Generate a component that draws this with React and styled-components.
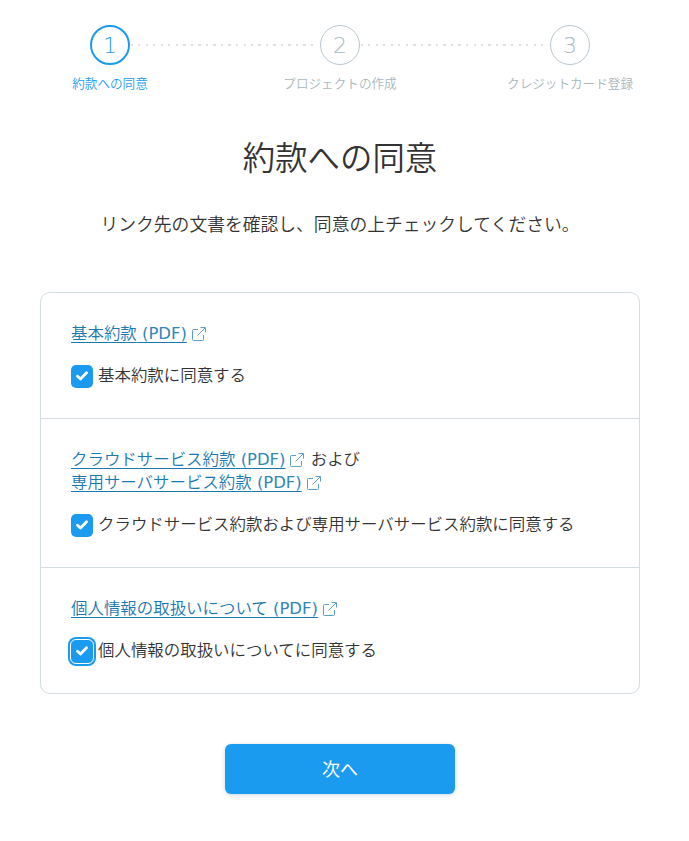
import React from 'react';
import styled, { createGlobalStyle } from 'styled-components';

const Global = createGlobalStyle`
  html, body {
    margin: 0;
    padding: 0;
    background: #fff;
  }
  body {
    font-family: "DejaVu Sans", "Noto Sans CJK JP", sans-serif;
    font-weight: 350;
    color: #333;
  }
`;

const Page = styled.div`
  width: 680px;
  padding-top: 25px;
`;

const Stepper = styled.ol`
  display: grid;
  grid-template-columns: repeat(3, 230px);
  justify-content: center;
  list-style: none;
  margin: 0;
  padding: 0;
`;

const Step = styled.li`
  position: relative;
  display: flex;
  flex-direction: column;
  align-items: center;

  &:not(:last-child)::after {
    content: '';
    position: absolute;
    top: 19px;
    left: 136px;
    width: 184px;
    height: 2px;
    background: repeating-linear-gradient(to right, #dbe1e5 0 2px, transparent 2px 7.5px);
  }
`;

const StepCircle = styled.span`
  box-sizing: border-box;
  width: 40px;
  height: 40px;
  border-radius: 50%;
  display: flex;
  align-items: center;
  justify-content: center;
  font-size: 22px;
  font-weight: 200;
  background: #fff;
  border: ${p => (p.$active ? '2px solid #1a9bf0' : '1px solid #b8c6cf')};
  color: ${p => (p.$active ? '#1a9bf0' : '#a9b8c2')};
`;

const StepLabel = styled.span`
  margin-top: 8px;
  font-size: 12.6px;
  line-height: 22px;
  color: ${p => (p.$active ? '#1a9bf0' : '#a9b6be')};
`;

const Title = styled.h1`
  margin: 40px 0 0;
  font-size: 32.4px;
  font-weight: 350;
  line-height: 48px;
  text-align: center;
  color: #333;
`;

const Lead = styled.p`
  margin: 28px 0 0;
  font-size: 17.8px;
  line-height: 28px;
  text-align: center;
  color: #333;
`;

const Card = styled.div`
  box-sizing: border-box;
  width: 600px;
  margin: 53px auto 0;
  border: 1px solid #d3dde2;
  border-radius: 10px;
`;

const Section = styled.section`
  padding: 29px 30px 30px;

  & + & {
    border-top: 1px solid #d3dde2;
  }
`;

const DocLine = styled.div`
  font-size: 16.45px;
  line-height: 23px;
  color: #333;
`;

const DocLink = styled.a`
  color: #1a78b0;
  text-decoration: underline;
  text-underline-offset: 3px;
`;

const Pdf = styled.span`
  font-weight: 400;
  color: #2f87ba;
`;

const CheckRow = styled.label`
  display: flex;
  align-items: center;
  gap: 5px;
  margin-top: 19px;
  font-size: 16.45px;
  line-height: 24px;
  color: #333;
`;

const Box = styled.span`
  position: relative;
  flex: none;
  width: 22px;
  height: 23px;
  border-radius: 5px;
  background: #1a9bf0;
  display: flex;
  align-items: center;
  justify-content: center;

  ${p => p.$focused && `
    outline: 1px solid #fff;
    outline-offset: -0.5px;
    box-shadow: 0 0 0 3px #1a9bf0;
  `}
`;

const Footer = styled.div`
  display: flex;
  justify-content: center;
  margin-top: 50px;
  padding-bottom: 47px;
`;

const NextButton = styled.button`
  width: 230px;
  height: 50px;
  padding: 0 0 3px;
  border: none;
  border-radius: 6px;
  background: #1a9bf0;
  color: #fff;
  font-family: inherit;
  font-weight: 400;
  font-size: 18px;
  box-shadow: 0 1px 4px rgba(60, 90, 110, 0.25);
  cursor: pointer;
`;

const ExternalIcon = () => (
  <svg width="16" height="16" viewBox="0 0 16 16" fill="none" stroke="#5a9fc9" strokeWidth="1" style={{ verticalAlign: '-3px', marginLeft: 4 }}>
    <path d="M7 3.5H2.5a1 1 0 0 0-1 1v9a1 1 0 0 0 1 1h9a1 1 0 0 0 1-1V9" />
    <path d="M6.5 9.5L14 2M9.5 1.5h5v5" />
  </svg>
);

const Check = () => (
  <svg width="12" height="10" viewBox="0 0 12 10" fill="none" stroke="#fff" strokeWidth="2.8" strokeLinecap="round" strokeLinejoin="round">
    <path d="M1.5 5.2L4.5 8L10.5 1.8" />
  </svg>
);

const Doc = ({ name }) => (
  <>
    <DocLink href="#">{name} <Pdf>(PDF)</Pdf></DocLink>
    <ExternalIcon />
  </>
);

const Agree = ({ focused, children }) => (
  <CheckRow>
    <Box $focused={focused}><Check /></Box>
    {children}
  </CheckRow>
);

const steps = ['約款への同意', 'プロジェクトの作成', 'クレジットカード登録'];

export default function App() {
  return (
    <Page>
      <Global />
      <Stepper>
        {steps.map((label, i) => (
          <Step key={label}>
            <StepCircle $active={i === 0}>{i + 1}</StepCircle>
            <StepLabel $active={i === 0}>{label}</StepLabel>
          </Step>
        ))}
      </Stepper>

      <Title>約款への同意</Title>
      <Lead>リンク先の文書を確認し、同意の上チェックしてください。</Lead>

      <Card>
        <Section>
          <DocLine><Doc name="基本約款" /></DocLine>
          <Agree>基本約款に同意する</Agree>
        </Section>
        <Section>
          <DocLine><Doc name="クラウドサービス約款" /> および</DocLine>
          <DocLine><Doc name="専用サーバサービス約款" /></DocLine>
          <Agree>クラウドサービス約款および専用サーバサービス約款に同意する</Agree>
        </Section>
        <Section>
          <DocLine><Doc name="個人情報の取扱いについて" /></DocLine>
          <Agree focused>個人情報の取扱いについてに同意する</Agree>
        </Section>
      </Card>

      <Footer>
        <NextButton>次へ</NextButton>
      </Footer>
    </Page>
  );
}
